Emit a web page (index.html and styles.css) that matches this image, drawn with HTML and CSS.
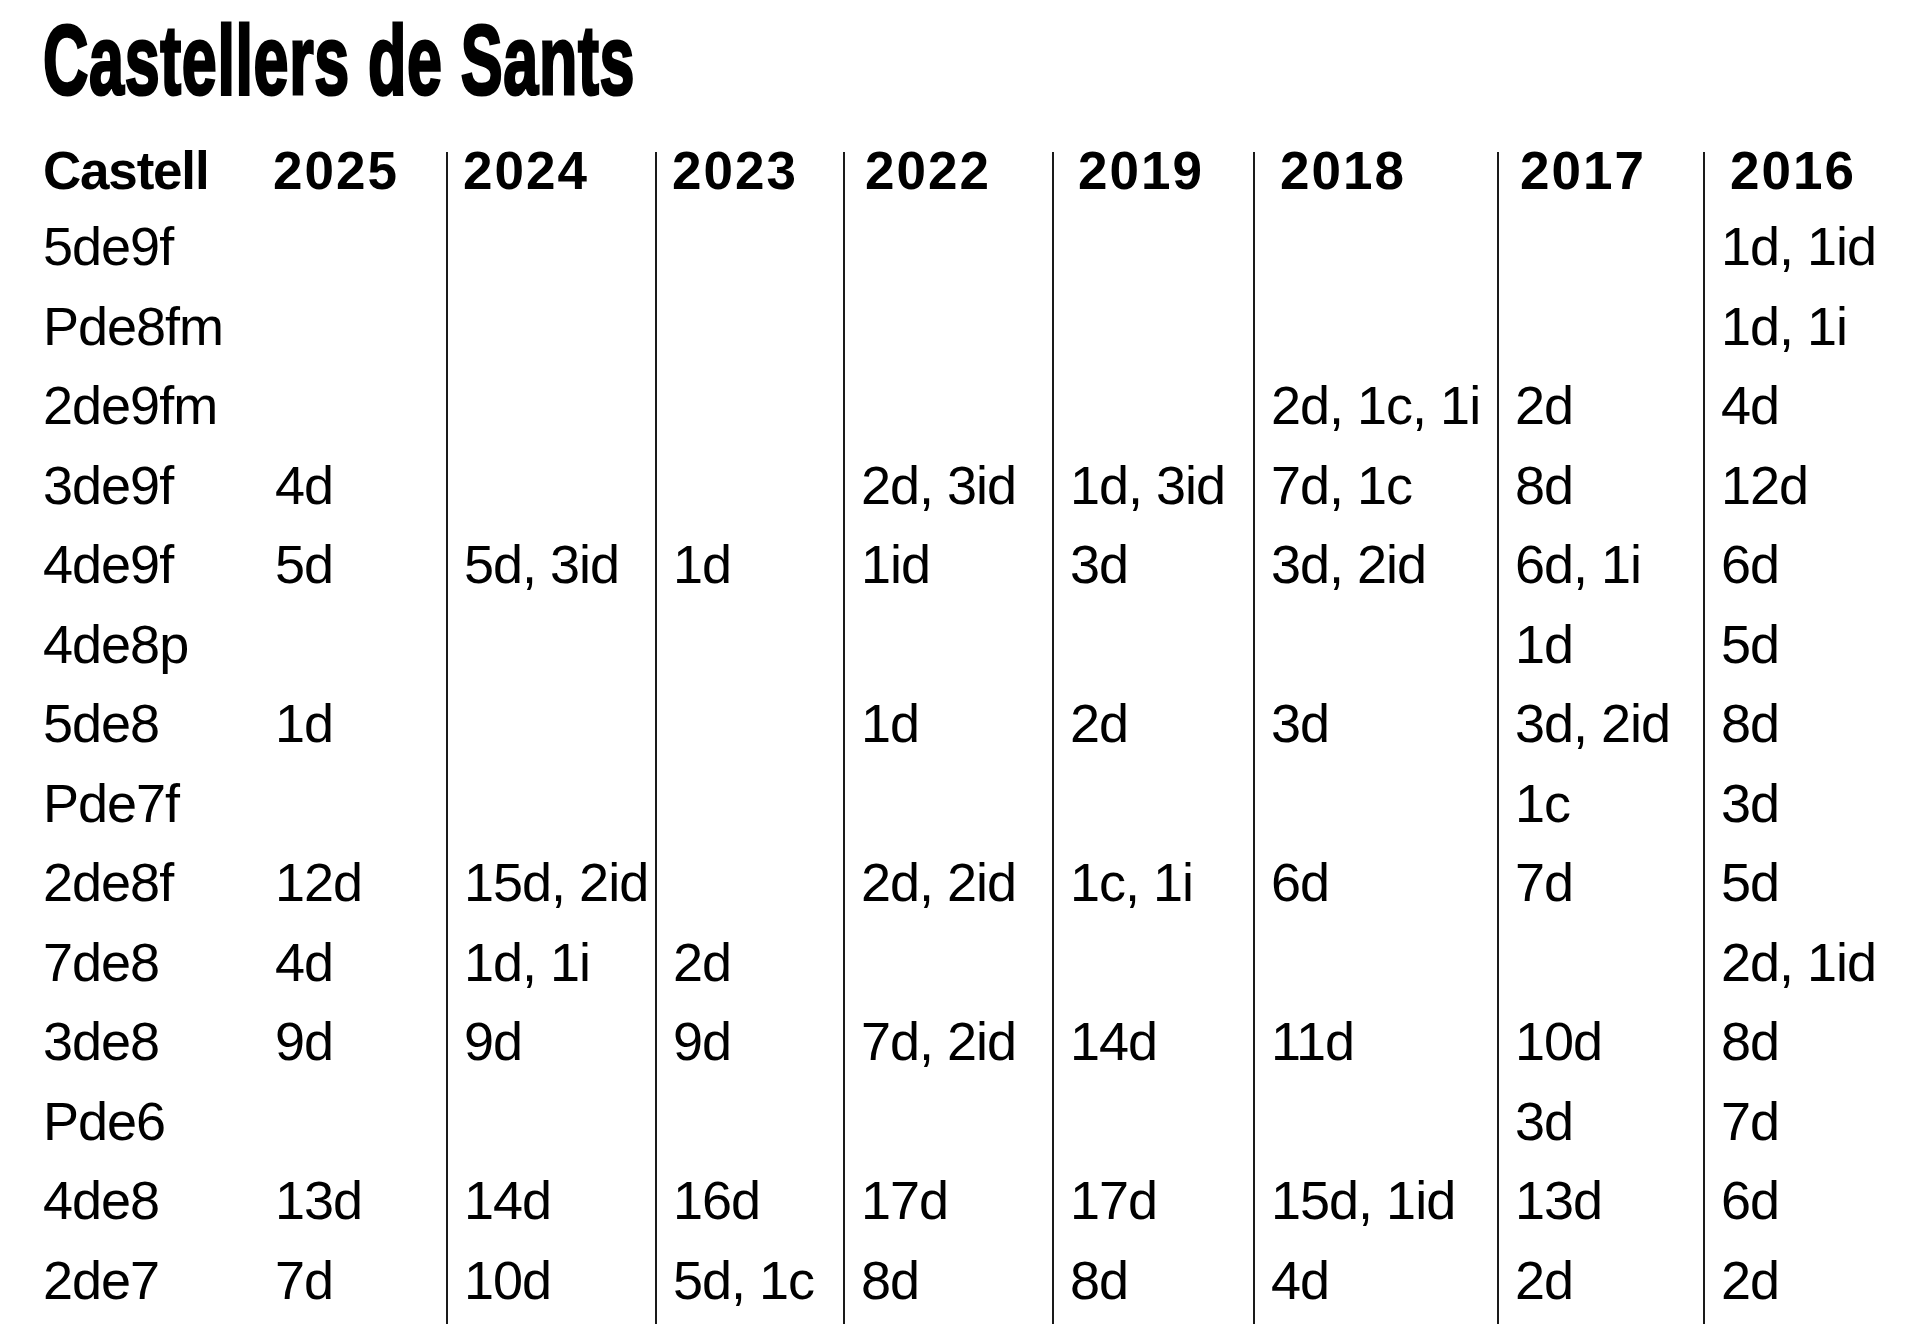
FILE: index.html
```html
<!DOCTYPE html>
<html lang="ca">
<head>
<meta charset="utf-8">
<title>Castellers de Sants</title>
<link rel="stylesheet" href="styles.css">
</head>
<body>
<main class="page">
  <h1 class="title"><span class="title-text">Castellers de Sants</span></h1>
  <div class="table">
    <div class="cell head first">Castell</div><div class="cell head">2025</div><div class="cell head">2024</div><div class="cell head">2023</div><div class="cell head">2022</div><div class="cell head">2019</div><div class="cell head">2018</div><div class="cell head">2017</div><div class="cell head">2016</div>

    <div class="cell">5de9f</div><div class="cell"></div><div class="cell"></div><div class="cell"></div><div class="cell"></div><div class="cell"></div><div class="cell"></div><div class="cell"></div><div class="cell">1d, 1id</div>

    <div class="cell">Pde8fm</div><div class="cell"></div><div class="cell"></div><div class="cell"></div><div class="cell"></div><div class="cell"></div><div class="cell"></div><div class="cell"></div><div class="cell">1d, 1i</div>

    <div class="cell">2de9fm</div><div class="cell"></div><div class="cell"></div><div class="cell"></div><div class="cell"></div><div class="cell"></div><div class="cell">2d, 1c, 1i</div><div class="cell">2d</div><div class="cell">4d</div>

    <div class="cell">3de9f</div><div class="cell">4d</div><div class="cell"></div><div class="cell"></div><div class="cell">2d, 3id</div><div class="cell">1d, 3id</div><div class="cell">7d, 1c</div><div class="cell">8d</div><div class="cell">12d</div>

    <div class="cell">4de9f</div><div class="cell">5d</div><div class="cell">5d, 3id</div><div class="cell">1d</div><div class="cell">1id</div><div class="cell">3d</div><div class="cell">3d, 2id</div><div class="cell">6d, 1i</div><div class="cell">6d</div>

    <div class="cell">4de8p</div><div class="cell"></div><div class="cell"></div><div class="cell"></div><div class="cell"></div><div class="cell"></div><div class="cell"></div><div class="cell">1d</div><div class="cell">5d</div>

    <div class="cell">5de8</div><div class="cell">1d</div><div class="cell"></div><div class="cell"></div><div class="cell">1d</div><div class="cell">2d</div><div class="cell">3d</div><div class="cell">3d, 2id</div><div class="cell">8d</div>

    <div class="cell">Pde7f</div><div class="cell"></div><div class="cell"></div><div class="cell"></div><div class="cell"></div><div class="cell"></div><div class="cell"></div><div class="cell">1c</div><div class="cell">3d</div>

    <div class="cell">2de8f</div><div class="cell">12d</div><div class="cell">15d, 2id</div><div class="cell"></div><div class="cell">2d, 2id</div><div class="cell">1c, 1i</div><div class="cell">6d</div><div class="cell">7d</div><div class="cell">5d</div>

    <div class="cell">7de8</div><div class="cell">4d</div><div class="cell">1d, 1i</div><div class="cell">2d</div><div class="cell"></div><div class="cell"></div><div class="cell"></div><div class="cell"></div><div class="cell">2d, 1id</div>

    <div class="cell">3de8</div><div class="cell">9d</div><div class="cell">9d</div><div class="cell">9d</div><div class="cell">7d, 2id</div><div class="cell">14d</div><div class="cell">11d</div><div class="cell">10d</div><div class="cell">8d</div>

    <div class="cell">Pde6</div><div class="cell"></div><div class="cell"></div><div class="cell"></div><div class="cell"></div><div class="cell"></div><div class="cell"></div><div class="cell">3d</div><div class="cell">7d</div>

    <div class="cell">4de8</div><div class="cell">13d</div><div class="cell">14d</div><div class="cell">16d</div><div class="cell">17d</div><div class="cell">17d</div><div class="cell">15d, 1id</div><div class="cell">13d</div><div class="cell">6d</div>

    <div class="cell last">2de7</div><div class="cell last">7d</div><div class="cell last">10d</div><div class="cell last">5d, 1c</div><div class="cell last">8d</div><div class="cell last">8d</div><div class="cell last">4d</div><div class="cell last">2d</div><div class="cell last">2d</div>
  </div>
</main>
</body>
</html>
```

FILE: styles.css
```css
html, body {
  margin: 0;
  padding: 0;
  background: #ffffff;
  color: #000000;
}

.page {
  width: 1920px;
  height: 1342px;
  box-sizing: border-box;
  padding: 10px 0 0 43px;
  font-family: "Liberation Sans", Arial, sans-serif;
  overflow: hidden;
}

.title {
  margin: 0 0 43px 0;
  height: 99px;
  font-size: 99px;
  line-height: 99px;
  font-weight: 700;
  white-space: nowrap;
}

.title-text {
  display: inline-block;
  transform: scaleX(0.635);
  transform-origin: 0 0;
  -webkit-text-stroke: 3px #000;
  letter-spacing: 1px;
}

.table {
  display: grid;
  grid-template-columns: 214px 189px 209px 188px 209px 201px 244px 206px 217px;
}

.cell {
  height: 79.5px;
  font-size: 54px;
  line-height: 79.5px;
  letter-spacing: -1px;
  white-space: nowrap;
  box-sizing: border-box;
}

.cell:nth-child(9n+2) {
  padding-left: 18px;
}

.cell:nth-child(9n+3),
.cell:nth-child(9n+4),
.cell:nth-child(9n+5),
.cell:nth-child(9n+6),
.cell:nth-child(9n+7),
.cell:nth-child(9n+8),
.cell:nth-child(9n) {
  border-left: 2px solid #1a1a1a;
  padding-left: 16px;
}

.cell.last {
  height: 83.5px;
  padding-bottom: 4px;
}

.cell.head {
  height: 55.4px;
  font-size: 53px;
  line-height: 38px;
  font-weight: 700;
  letter-spacing: 2px;
}

.cell.head.first {
  letter-spacing: -1.2px;
}

.cell.head:nth-child(2) { padding-left: 16px; }
.cell.head:nth-child(3) { padding-left: 15px; }
.cell.head:nth-child(4) { padding-left: 15px; }
.cell.head:nth-child(5) { padding-left: 20px; }
.cell.head:nth-child(6) { padding-left: 24px; }
.cell.head:nth-child(7) { padding-left: 25px; }
.cell.head:nth-child(8) { padding-left: 21px; }
.cell.head:nth-child(9) { padding-left: 25px; }
```
